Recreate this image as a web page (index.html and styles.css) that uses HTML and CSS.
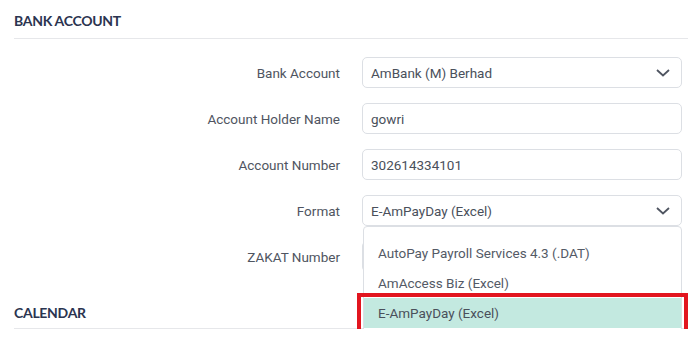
FILE: index.html
```html
<!DOCTYPE html>
<html lang="en">
<head>
  <meta charset="UTF-8">
  <meta name="viewport" content="width=device-width, initial-scale=1.0">
  <title>Bank Account</title>
  <link rel="stylesheet" href="styles.css">
</head>
<body>
  <div class="page">
    <h2 class="section-title">BANK ACCOUNT</h2>

    <div class="form">
      <div class="form-row">
        <label class="form-label">Bank Account</label>
        <div class="control select">
          <span>AmBank (M) Berhad</span>
          <svg class="chevron" width="14" height="8" viewBox="0 0 14 8"><path d="M1 1l6 5.5L13 1" fill="none" stroke="#4f5561" stroke-width="1.8"/></svg>
        </div>
      </div>
      <div class="form-row">
        <label class="form-label">Account Holder Name</label>
        <div class="control">gowri</div>
      </div>
      <div class="form-row">
        <label class="form-label">Account Number</label>
        <div class="control">302614334101</div>
      </div>
      <div class="form-row format-row">
        <label class="form-label">Format</label>
        <div class="control select">
          <span>E-AmPayDay (Excel)</span>
          <svg class="chevron" width="14" height="8" viewBox="0 0 14 8"><path d="M1 1l6 5.5L13 1" fill="none" stroke="#4f5561" stroke-width="1.8"/></svg>
        </div>
        <!-- open list of the format select -->
        <ul class="dropdown">
          <li>AutoPay Payroll Services 4.3 (.DAT)</li>
          <li>AmAccess Biz (Excel)</li>
          <li class="selected">E-AmPayDay (Excel)</li>
        </ul>
        <div class="highlight-box"></div>
      </div>
      <div class="form-row">
        <label class="form-label">ZAKAT Number</label>
        <div class="control"></div>
      </div>
    </div>

    <h2 class="section-title calendar">CALENDAR</h2>
  </div>
</body>
</html>
```

FILE: styles.css
```css
body {
  margin: 0;
  background: #fff;
  font-family: Roboto, "Liberation Sans", Arial, sans-serif;
  color: #4f5561;
  overflow: hidden;
}
.page {
  padding: 0 0 0 14px;
}
.section-title {
  margin: 0;
  padding: 11px 0 8px;
  font-family: Lato, "Liberation Sans", sans-serif;
  font-weight: 700;
  font-size: 14px;
  line-height: 19px;
  color: #2b3450;
  border-bottom: 1px solid #e6e7ea;
  letter-spacing: -0.3px;
}
.section-title.calendar {
  padding-top: 31px;
  padding-bottom: 6px;
}
.form {
  display: flex;
  flex-direction: column;
  gap: 15px;
  padding: 18px 0 0;
}
.form-row {
  display: flex;
  align-items: center;
  gap: 22px;
  position: relative;
}
.form-label {
  width: 326px;
  text-align: right;
  font-size: 13.5px;
}
.control {
  width: 320px;
  height: 31px;
  box-sizing: border-box;
  border: 1px solid #dcdfe4;
  border-radius: 5px;
  padding: 0 8px;
  display: flex;
  align-items: center;
  justify-content: space-between;
  font-size: 13.5px;
  color: #4a505b;
}
.chevron {
  margin-right: 3px;
}
.dropdown {
  position: absolute;
  z-index: 2;
  left: 349px;
  top: 31px;
  width: 319px;
  box-sizing: border-box;
  margin: 0;
  padding: 11px 0 6px;
  list-style: none;
  background: #fff;
  border: 1px solid #dcdfe4;
  border-radius: 4px;
  font-size: 13.5px;
  color: #545a66;
}
.dropdown li {
  height: 30px;
  line-height: 30px;
  padding: 0 14px;
  white-space: nowrap;
}
.dropdown li.selected {
  background: #c3e9e0;
  color: #4a505b;
}
.highlight-box {
  position: absolute;
  z-index: 3;
  left: 343px;
  top: 98px;
  width: 331px;
  height: 41px;
  box-sizing: border-box;
  border: 4px solid #e2151f;
}
```
